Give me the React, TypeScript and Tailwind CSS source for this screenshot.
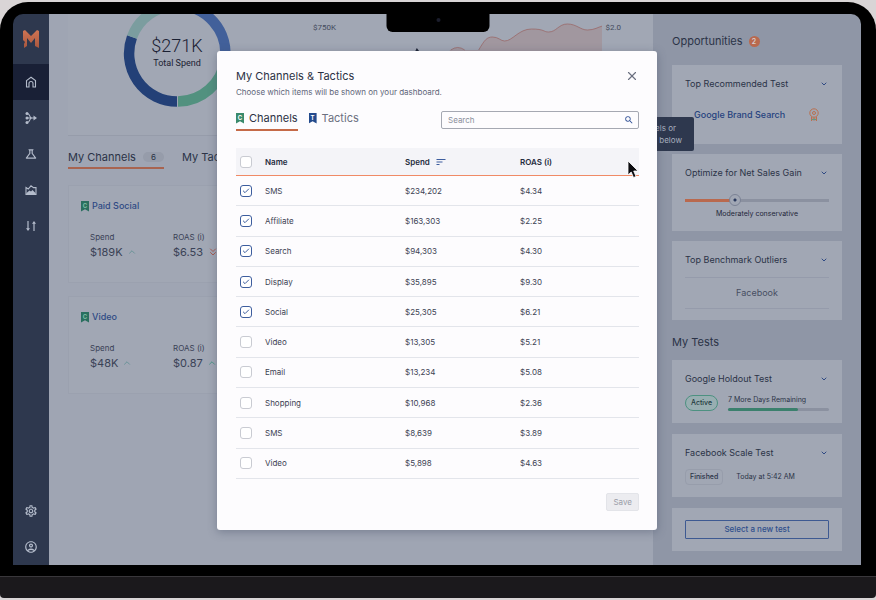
import { useState } from "react";
import type { ReactNode } from "react";
import { Check, ChevronDown, ChevronUp, ChevronsDown, X } from "lucide-react";
import { MdOutlineAccountCircle, MdOutlineScience, MdOutlineSettings, MdSearch, MdSort } from "react-icons/md";

const rows = [
  { name: "SMS", spend: "$234,202", roas: "$4.34", on: true },
  { name: "Affiliate", spend: "$163,303", roas: "$2.25", on: true },
  { name: "Search", spend: "$94,303", roas: "$4.30", on: true },
  { name: "Display", spend: "$35,895", roas: "$9.30", on: true },
  { name: "Social", spend: "$25,305", roas: "$6.21", on: true },
  { name: "Video", spend: "$13,305", roas: "$5.21", on: false },
  { name: "Email", spend: "$13,234", roas: "$5.08", on: false },
  { name: "Shopping", spend: "$10,968", roas: "$2.36", on: false },
  { name: "SMS", spend: "$8,639", roas: "$3.89", on: false },
  { name: "Video", spend: "$5,898", roas: "$4.63", on: false },
];

function Logo() {
  return (
    <svg viewBox="0 0 16 18" className="h-[18px] w-4" aria-label="Logo">
      <defs>
        <linearGradient id="logo" x1="0" y1="0" x2="0" y2="1">
          <stop offset="0" stopColor="#cf7453" />
          <stop offset="1" stopColor="#a8573f" />
        </linearGradient>
      </defs>
      <path d="M0 1l2-1 6 6 6-6 2 1v17l-4-2V8l-4 5-4-5v8l-3 2V14l1-2-2-2z" fill="url(#logo)" />
    </svg>
  );
}

function HomeIcon() {
  return (
    <svg viewBox="0 0 12 12" className="size-3" fill="none" stroke="currentColor" strokeWidth="1.1">
      <path d="M1.500 4.600 6 1.200l4.500 3.400V11H8V7.500a2 2 0 0 0-4 0V11H1.500z" />
    </svg>
  );
}

function NetworkIcon() {
  return (
    <svg viewBox="0 0 12 14" className="h-3.5 w-3" fill="none" stroke="currentColor" strokeWidth="1.100">
      <path d="M2 2.500c4 0 1.500 4.500 5 4.500M2 11.500c4 0 1.500-4.500 5-4.500M2 7h8" />
      <g fill="currentColor" stroke="none">
        <circle cx="2" cy="2.500" r="1.500" />
        <circle cx="2" cy="7" r="1.500" />
        <circle cx="2" cy="11.500" r="1.500" />
        <path d="M8.500 4.500 12 7 8.500 9.500z" />
      </g>
    </svg>
  );
}

function AreaIcon() {
  return (
    <svg viewBox="0 0 12 12" className="size-3" fill="none" stroke="currentColor" strokeWidth="1.100">
      <path d="M1 3.500 3.200 5 6 1.800 8.500 3.600H11V10.400H1z" />
      <path d="M1.500 9 4.500 6.500l1.500 1L7.500 6l3 3v1.400h-9z" fill="currentColor" stroke="none" />
    </svg>
  );
}

function SwapIcon() {
  return (
    <svg viewBox="0 0 12 12" className="size-3" fill="none" stroke="currentColor" strokeWidth="1.200">
      <path d="M3 1v8M9 11V3" />
      <path d="M1 8.200h4L3 11zM7 3.800h4L9 1z" fill="currentColor" stroke="none" />
    </svg>
  );
}

function Bookmark({ letter, color }: { letter: string; color: string }) {
  return (
    <span
      className={`flex h-[11px] w-2 shrink-0 items-start justify-center pt-px text-[6px] leading-[8px] font-bold [clip-path:polygon(0_0,100%_0,100%_100%,50%_80%,0_100%)] ${color}`}
    >
      {letter}
    </span>
  );
}

function NavButton({ label, active, children }: { label: string; active?: boolean; children: ReactNode }) {
  return (
    <button
      aria-label={label}
      className={`flex h-9 w-full items-center justify-center text-[#b4bccb] ${active ? "bg-[#192036]" : ""}`}
    >
      {children}
    </button>
  );
}

function Sidebar() {
  return (
    <nav className="flex w-9 shrink-0 flex-col bg-[#2e384e]">
      <div className="flex h-[50px] items-center justify-center">
        <Logo />
      </div>
      <NavButton label="Home" active><HomeIcon /></NavButton>
      <NavButton label="Channels"><NetworkIcon /></NavButton>
      <NavButton label="Experiments"><MdOutlineScience className="size-3.5" /></NavButton>
      <NavButton label="Reports"><AreaIcon /></NavButton>
      <NavButton label="Compare"><SwapIcon /></NavButton>
      <div className="mt-auto">
        <NavButton label="Settings"><MdOutlineSettings className="size-3.5" /></NavButton>
        <NavButton label="Account"><MdOutlineAccountCircle className="size-3.5" /></NavButton>
      </div>
    </nav>
  );
}

function ChannelCard({ name, spend, roas, down }: { name: string; spend: string; roas: string; down?: boolean }) {
  return (
    <article className="flex flex-col gap-[17px] border border-[#9ba1af] bg-[#a1a7b4] px-3 pt-3 pb-[21px]">
      <h3 className="flex items-center gap-[3px] text-[9px] leading-4 font-medium text-[#2f4a84]">
        <Bookmark letter="C" color="bg-[#2a6f5f] text-[#7fc0a8]" />
        {name}
      </h3>
      <dl className="flex px-[9px] text-[#3a4256]">
        <div className="w-[83px]">
          <dt className="text-[8px] leading-[12px]">Spend</dt>
          <dd className="flex items-center gap-1 text-[11px] leading-[18px]">
            {spend}
            <ChevronUp className="size-2.5 text-[#5f8f93]" />
          </dd>
        </div>
        <div className="w-[83px]">
          <dt className="text-[8px] leading-[12px]">ROAS (i)</dt>
          <dd className="flex items-center gap-1 text-[11px] leading-[18px]">
            {roas}
            {down ? <ChevronsDown className="size-3 text-[#a85a50]" /> : <ChevronUp className="size-2.5 text-[#3f9080]" />}
          </dd>
        </div>
      </dl>
    </article>
  );
}

function Dashboard() {
  return (
    <main className="min-w-0 flex-1 overflow-hidden bg-[#9fa5b3] pl-[19px]">
      <section className="flex h-[122px] items-start border-b border-[#969caa] bg-[#a1a7b4]">
        <div className="ml-[55px] grid w-[108px] shrink-0">
          <svg viewBox="123 14 108 94" className="h-[94px] w-[108px] [grid-area:1/1]" fill="none" strokeWidth="10.500">
            <path d="M177 101.500A48 48 0 0 1 132 37" stroke="#234077" />
            <path d="M132 37A48 48 0 0 1 177 5.500" stroke="#7b9d9f" />
            <path d="M177 5.500A48 48 0 0 1 225 60" stroke="#42609a" />
            <path d="M225 60A48 48 0 0 1 178 101.500" stroke="#52917f" />
          </svg>
          <div className="flex flex-col items-center pt-[22px] text-[#1a2032] [grid-area:1/1]">
            <span className="font-[Roboto,sans-serif] text-lg leading-5 font-light">$271K</span>
            <span className="font-[Roboto,sans-serif] text-[9px] leading-[14px]">Total Spend</span>
          </div>
        </div>
        <div className="ml-[82px] flex min-w-0 flex-1 items-start gap-[3px] pr-8 font-[Roboto,sans-serif] text-[8px] leading-[10px] text-[#444b5d]">
          <span className="pt-[9px]">$750K</span>
          <svg viewBox="340 14 264 100" preserveAspectRatio="none" className="h-[100px] min-w-0 flex-1">
            <path
              d="M340 114L452 50Q459 45 466 50L480 50C486 40 488 37 494 37S502 41 506 41C514 41 520 29 533 29S545 32 550 32C558 32 560 24 569 24S582 30 589 30S600 27 604 26V114z"
              fill="#a1979f"
            />
            <path
              d="M452 50Q459 45 466 50M480 50C486 40 488 37 494 37S502 41 506 41C514 41 520 29 533 29S545 32 550 32C558 32 560 24 569 24S582 30 589 30S600 27 604 26"
              fill="none"
              stroke="#9a6a69"
              strokeWidth="0.800"
            />
            <path d="M416 52l2-4 3 4z" fill="#1a2032" />
          </svg>
          <span className="pt-[9px]">$2.0</span>
        </div>
      </section>
      <div className="flex gap-[18px] pt-[13px] text-[11px] leading-4 text-[#2b3347]">
        <button className="flex w-24 items-center justify-between border-b-2 border-[#a86450] pb-[2px]">
          My Channels
          <span className="rounded-full bg-[#969caa] px-2 text-[8px] leading-[10px]">6</span>
        </button>
        <button className="pb-1">My Tactics</button>
      </div>
      <div className="flex flex-col gap-[13px] pt-4">
        <ChannelCard name="Paid Social" spend="$189K" roas="$6.53" down />
        <ChannelCard name="Video" spend="$48K" roas="$0.87" />
      </div>
    </main>
  );
}

function PanelCard({ title, children }: { title: string; children: ReactNode }) {
  return (
    <article className="bg-[#a1a7b4] px-[13px] pt-2.5">
      <button className="flex w-full items-center justify-between pr-px text-[9px] leading-[18px] text-[#2b3347]">
        {title}
        <ChevronDown className="size-2 text-[#2f4a84]" strokeWidth={3} />
      </button>
      {children}
    </article>
  );
}

function RightPanel() {
  return (
    <aside className="w-[208px] shrink-0 overflow-hidden bg-[#8f96a6] px-[19px]">
      <h2 className="flex items-center gap-1.5 pt-[18px] text-[11px] leading-[18px] text-[#2b3347]">
        Opportunities
        <span className="flex size-[11px] items-center justify-center rounded-full bg-[#b9694e] text-[7px] leading-none font-semibold text-[#d5cfd2]">2</span>
      </h2>
      <div className="flex flex-col gap-2.5 pt-[15px]">
        <PanelCard title="Top Recommended Test">
          <div className="flex items-center justify-between pt-[13px] pr-2.5 pb-5 pl-[9px]">
            <a href="#brand" className="text-[9px] leading-[18px] font-medium text-[#26437f]">Google Brand Search</a>
            <svg viewBox="0 0 10 14" className="h-3.5 w-2.5" fill="none" stroke="#b9704f">
              <circle cx="5" cy="5" r="4.200" />
              <circle cx="5" cy="5" r="1.500" />
              <path d="M2.500 9v4M4.200 9.500v3M5.800 9.500v3M7.500 9v4" />
              <path d="M3 11.500h4" stroke="#5f9a86" />
            </svg>
          </div>
        </PanelCard>
        <PanelCard title="Optimize for Net Sales Gain">
          <label className="flex flex-col items-center pb-3">
            <input
              type="range"
              defaultValue="33"
              aria-label="Sales gain preference"
              className="mt-3 mb-[3px] h-3 w-full appearance-none bg-[linear-gradient(to_right,#b9694e_34%,#8b91a0_34%)] bg-[length:100%_3px] bg-center bg-no-repeat [&::-webkit-slider-thumb]:size-3 [&::-webkit-slider-thumb]:appearance-none [&::-webkit-slider-thumb]:rounded-full [&::-webkit-slider-thumb]:border [&::-webkit-slider-thumb]:border-[#7b8295] [&::-webkit-slider-thumb]:bg-[radial-gradient(circle,#2b3a5e_1px,#a1a7b4_2px)]"
            />
            <span className="text-[7px] leading-[10px] text-[#1f2639]">Moderately conservative</span>
          </label>
        </PanelCard>
        <PanelCard title="Top Benchmark Outliers">
          <div className="mt-2 mb-[11px] border-y border-[#959bab] py-1.5 text-center text-[9px] leading-[18px] text-[#474e62]">Facebook</div>
        </PanelCard>
      </div>
      <h2 className="pt-[13px] text-[11px] leading-[18px] text-[#2b3347]">My Tests</h2>
      <div className="flex flex-col gap-[11px] pt-[9px]">
        <PanelCard title="Google Holdout Test">
          <div className="flex items-center gap-2.5 pt-[7px] pb-3">
            <span className="rounded-full border border-[#4d9181] bg-[#98aeb1] px-[5px] text-[7px] leading-[14px] font-medium text-[#1f3a40]">Active</span>
            <div className="flex flex-1 flex-col gap-[3px]">
              <span className="text-[7px] leading-[10px] text-[#2b3347]">7 More Days Remaining</span>
              <div className="h-[3px] rounded-full bg-[#8b91a0]">
                <div className="h-full w-[69%] rounded-full bg-[#3b806d]" />
              </div>
            </div>
          </div>
        </PanelCard>
        <PanelCard title="Facebook Scale Test">
          <div className="flex items-center gap-[13px] pt-[7px] pb-3 text-[7px] leading-[14px] text-[#2b3347]">
            <span className="rounded border border-[#979dab] px-1 font-medium">Finished</span>
            Today at 5:42 AM
          </div>
        </PanelCard>
        <div className="flex bg-[#a1a7b4] px-[13px] py-3">
          <button className="flex-1 rounded-[1px] border border-[#3e5a92] text-[8px] leading-[17px] font-medium text-[#2f4f8c]">Select a new test</button>
        </div>
      </div>
    </aside>
  );
}

function Tick({ label, checked, onChange }: { label: string; checked: boolean; onChange: () => void }) {
  return (
    <label className="grid w-5 place-items-center">
      <input
        type="checkbox"
        aria-label={label}
        checked={checked}
        onChange={onChange}
        className="size-3 appearance-none rounded-[3px] border border-[#c9cbd2] bg-white [grid-area:1/1] checked:border-[#3d5d9e]"
      />
      {checked && <Check className="pointer-events-none size-2 text-[#3d5d9e] [grid-area:1/1]" strokeWidth={3} />}
    </label>
  );
}

function ChannelsDialog() {
  const [picked, setPicked] = useState(rows.map((r) => r.on));
  const toggle = (i: number) => setPicked(picked.map((p, j) => (j === i ? !p : p)));
  return (
    <div role="dialog" aria-labelledby="dialog-title" className="w-[440px] rounded-[3px] bg-[#fdfcfe] pt-[17px] pr-[18px] pb-[19px] pl-[19px] text-[#3c4253] shadow-[0_2px_10px_rgba(60,70,95,0.4)]">
      <header className="flex items-start justify-between">
        <div>
          <h1 id="dialog-title" className="text-[11px] leading-4 text-[#2b3144]">My Channels &amp; Tactics</h1>
          <p className="text-[8px] leading-4 text-[#5f6679]">Choose which items will be shown on your dashboard.</p>
        </div>
        <button aria-label="Close" className="py-px">
          <X className="size-3.5 text-[#6b7080]" />
        </button>
      </header>
      <div className="flex items-center justify-between pt-[9px]">
        <div className="flex gap-[11px] text-[11px] leading-[18px]">
          <button className="flex items-center gap-[5px] border-b-2 border-[#c56a48] pb-0.5 text-[#2b3144]">
            <Bookmark letter="C" color="bg-[#3a8a6c] text-white" />
            Channels
          </button>
          <button className="flex items-center gap-[5px] pb-1 text-[#6b7080]">
            <Bookmark letter="T" color="bg-[#234a8c] text-white" />
            Tactics
          </button>
        </div>
        <div className="flex h-[18px] w-[198px] items-center rounded-[2px] border border-[#a5a8b2] pr-1 pl-1.5">
          <input type="search" aria-label="Search" placeholder="Search" className="min-w-0 flex-1 bg-transparent text-[8px] leading-3 outline-none placeholder:text-[#8b8f9b]" />
          <MdSearch className="size-2.5 text-[#2f4f96]" />
        </div>
      </div>
      <table className="mt-[17px] h-[331px] w-full table-fixed border-separate border-spacing-0 text-left text-[8px] leading-3">
        <thead>
          <tr className="h-7 bg-[#f4f4f8] text-[#262c40] [&>th]:border-b [&>th]:border-[#f08a66]">
            <th className="w-[29px]">
              <Tick label="Select all" checked={false} onChange={() => setPicked(rows.map(() => true))} />
            </th>
            <th className="w-[140px] font-semibold">Name</th>
            <th className="w-[115px] font-semibold">
              <span className="flex items-center gap-[5px]">
                Spend
                <MdSort className="size-3 text-[#3d5d9e]" />
              </span>
            </th>
            <th className="font-semibold">ROAS (i)</th>
          </tr>
        </thead>
        <tbody>
          {rows.map((r, i) => (
            <tr key={i} className="[&>td]:border-b [&>td]:border-[#e3e5eb]">
              <td>
                <Tick label={r.name} checked={picked[i]} onChange={() => toggle(i)} />
              </td>
              <td>{r.name}</td>
              <td>{r.spend}</td>
              <td>{r.roas}</td>
            </tr>
          ))}
        </tbody>
      </table>
      <footer className="flex justify-end pt-3.5">
        <button className="rounded-[2px] border border-[#e3e4e9] bg-[#ececf0] px-1.5 text-[8px] leading-4 text-[#9a9da8]">Save</button>
      </footer>
    </div>
  );
}

export default function App() {
  return (
    <div className="flex h-screen flex-col bg-[#d9d5d6] pt-0.5 pb-0.5 font-[Inter,sans-serif]">
      <div className="relative flex min-h-0 flex-1 flex-col rounded-t-[28px] bg-black pt-3 pr-[15px] pl-[13px]">
        <div className="relative flex min-h-0 flex-1 overflow-hidden rounded-t-[10px]">
          <Sidebar />
          <Dashboard />
          <RightPanel />
          <div className="absolute top-[103px] right-[167px] w-[150px] rounded-[2px] bg-[#2e384e] px-3 py-[5px] text-right text-[8px] leading-[12px] text-[#a9b0bf]">
            <p className="pr-1.5">channels or</p>
            <p>tactics below</p>
          </div>
          <div className="absolute inset-0 flex items-start justify-center pt-[37px]">
            <ChannelsDialog />
          </div>
          <svg viewBox="0 0 12 19" className="absolute top-[146px] right-[222px] h-[19px] w-3">
            <path d="M1 1v14l3.200-3 2.300 5.500 2.500-1L6.700 11H11z" fill="#0b0b0f" stroke="#fff" strokeWidth="0.800" />
          </svg>
        </div>
        <div className="absolute top-3 left-1/2 flex h-[18px] w-[103px] -translate-x-1/2 justify-center rounded-b-[6px] bg-black pt-1">
          <span className="size-1 rounded-full bg-[#1b1d2c]" />
        </div>
        <div className="h-[11px] shrink-0" />
      </div>
      <div className="h-[22px] shrink-0 rounded-b-[4px] border-t border-[#39373b] bg-[#1b191c]" />
    </div>
  );
}
